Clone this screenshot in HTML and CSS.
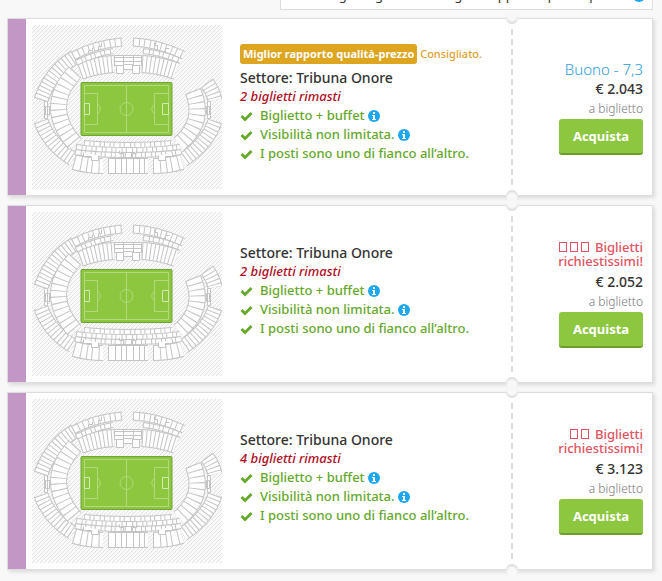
FILE: index.html
```
<!DOCTYPE html>
<html lang="it">
<head>
    <meta charset="UTF-8">
    <meta name="viewport" content="width=device-width, initial-scale=1.0">
    <title>Biglietti</title>
    <link rel="stylesheet" href="styles.css">
</head>
<body>
    <!-- Shared drawings -->
    <svg class="sprite" aria-hidden="true">
        <defs>
            <pattern id="hatch" width="4" height="4" patternUnits="userSpaceOnUse">
                <path class="hatch-line" d="M0 4L4 0M-1 1L1 -1M3 5L5 3"/>
            </pattern>
            <g id="rows-large">
                <path d="M9 75Q19 46 43 32"/>
                <path d="M9 96Q17 119 41 134"/>
                <path d="M183 96Q176 118 151 135"/>
                <path d="M175 58Q181 66 183 75"/>
            </g>
            <g id="rows-inner">
                <path d="M43 47Q10 82 43 119"/>
                <path d="M161 66Q174 97 147 119"/>
            </g>
            <g id="rows-long">
                <path d="M48 46Q65 40 82 39"/>
                <path d="M110 39Q127 40 144 46"/>
            </g>
            <g id="rows-short">
                <path d="M41 31Q63 19 90 17"/>
                <path d="M101 17Q126 18 151 30"/>
            </g>
            <g id="rows-thin">
                <path d="M44 38Q62 29 81 26"/>
                <path d="M111 26Q130 28 149 36"/>
                <path d="M52 118Q70 120 96 120T140 118"/>
                <path d="M44 122Q66 125 96 125T148 122"/>
                <path d="M43 127Q60 130 96 130T149 127"/>
            </g>
            <g id="rows-bottom">
                <path d="M42 137Q56 141 71 141"/>
                <path d="M76 141H116"/>
                <path d="M121 141Q136 141 150 137"/>
            </g>
            <symbol id="stadium" viewBox="0 0 190 164">
                <rect class="ground" width="190" height="164"/>
                <rect width="190" height="164" fill="url(#hatch)"/>
                <g fill="none">
                    <use href="#rows-large" stroke="#c4c4c4" stroke-width="15"/>
                    <use href="#rows-large" stroke="#fff" stroke-width="13"/>
                    <use href="#rows-large" stroke="#c4c4c4" stroke-width="14" stroke-dasharray="1 3"/>
                    <use href="#rows-inner" stroke="#c4c4c4" stroke-width="17"/>
                    <use href="#rows-inner" stroke="#fff" stroke-width="15"/>
                    <use href="#rows-inner" stroke="#c4c4c4" stroke-width="16" stroke-dasharray="1 5"/>
                    <use href="#rows-long" stroke="#c4c4c4" stroke-width="18"/>
                    <use href="#rows-long" stroke="#fff" stroke-width="16"/>
                    <use href="#rows-long" stroke="#c4c4c4" stroke-width="17" stroke-dasharray="1 3"/>
                    <use href="#rows-bottom" stroke="#c4c4c4" stroke-width="16"/>
                    <use href="#rows-bottom" stroke="#fff" stroke-width="14"/>
                    <use href="#rows-bottom" stroke="#c4c4c4" stroke-width="15" stroke-dasharray="1 6 1 5 1 4"/>
                    <use href="#rows-short" stroke="#c4c4c4" stroke-width="9"/>
                    <use href="#rows-short" stroke="#fff" stroke-width="7"/>
                    <use href="#rows-short" stroke="#c4c4c4" stroke-width="8" stroke-dasharray="1 5 1 4"/>
                    <use href="#rows-thin" stroke="#c4c4c4" stroke-width="6"/>
                    <use href="#rows-thin" stroke="#fff" stroke-width="4"/>
                    <use href="#rows-thin" stroke="#c4c4c4" stroke-width="5" stroke-dasharray="1 5 1 3"/>
                </g>
                <!-- Boxes between the stands -->
                <g class="box">
                    <path d="M82.500 30.500H109.500V40.500H82.500ZM82.500 32.500H109.500M82.500 36.500H109.500M91.500 30.500V40.500M101.500 30.500V40.500"/>
                    <path d="M84.500 40.500H91.500V48.500H84.500ZM100.500 40.500H107.500V48.500H100.500ZM91.500 39.500H100.500V44.500H91.500Z"/>
                    <path d="M12.500 76.500H15.500V93.500H12.500ZM13.500 81.500H17.500V89.500H13.500ZM175.500 76.500H178.500V93.500H175.500ZM174.500 81.500H177.500V89.500H174.500Z"/>
                    <path d="M56.500 28.500V25.500H60.500V22.500M66.500 26.500V21.500H69.500V17.500M122.500 17.500V20.500H125.500V25.500M133.500 28.500V23.500H137.500"/>
                    <path d="M51.500 127.500V131.500H59.500V135.500H66.500V130.500M87.500 125.500V128.500H91.500V132.500M100.500 132.500V128.500H104.500V125.500M126.500 130.500V135.500H133.500V131.500H140.500V127.500"/>
                </g>
                <!-- Pitch -->
                <rect class="pitch" x="49" y="57.500" width="91" height="53" rx="1"/>
                <path class="pitch-line" d="M52.500 60.500H136.500V107.500H52.500ZM94.500 60.500V107.500M52.500 68.500H65.500V99.500H52.500M136.500 68.500H122.500V99.500H136.500M65.500 79Q71 84 65.500 89M122.500 79Q117 84 122.500 89"/>
                <circle class="pitch-line" cx="94.500" cy="84" r="6.500"/>
                <path class="goal-line" d="M52.500 78.500H57.500V89.500H52.500ZM136.500 78.500H130.500V89.500H136.500Z"/>
            </symbol>
            <symbol id="check" viewBox="0 0 13 11">
                <path fill="#65a82b" d="M0.500 6L2.500 4L5 6.500L10.500 1L12.500 3L5 10.500Z"/>
            </symbol>
            <symbol id="info" viewBox="0 0 12 12">
                <circle cx="6" cy="6" r="6" fill="#1ba8ef"/>
                <path fill="#fff" d="M5 2H7V4H5ZM4 5H7V9H8V10H4V9H5V6H4Z"/>
            </symbol>
        </defs>
    </svg>

    <div class="container">
        <div class="notice">
            <p>Scegli i biglietti con miglior rapporto qualità-prezzo <svg class="info"><use href="#info"/></svg></p>
        </div>

        <div class="ticket">
            <svg class="map" role="img" aria-label="Mappa dello stadio"><use href="#stadium"/></svg>
            <div class="details">
                <div class="recommended"><span class="badge">Miglior rapporto qualità-prezzo</span> Consigliato.</div>
                <h3>Settore: Tribuna Onore</h3>
                <p class="left">2 biglietti rimasti</p>
                <ul>
                    <li><svg class="check"><use href="#check"/></svg>Biglietto + buffet <svg class="info"><use href="#info"/></svg></li>
                    <li><svg class="check"><use href="#check"/></svg>Visibilità non limitata. <svg class="info"><use href="#info"/></svg></li>
                    <li><svg class="check"><use href="#check"/></svg>I posti sono uno di fianco all’altro.</li>
                </ul>
            </div>
            <div class="buy">
                <div class="rating">Buono - 7,3</div>
                <div class="price">€ 2.043</div>
                <div class="per">a biglietto</div>
                <button class="btn" type="button">Acquista</button>
            </div>
        </div>

        <div class="ticket">
            <svg class="map" role="img" aria-label="Mappa dello stadio"><use href="#stadium"/></svg>
            <div class="details">
                <h3>Settore: Tribuna Onore</h3>
                <p class="left">2 biglietti rimasti</p>
                <ul>
                    <li><svg class="check"><use href="#check"/></svg>Biglietto + buffet <svg class="info"><use href="#info"/></svg></li>
                    <li><svg class="check"><use href="#check"/></svg>Visibilità non limitata. <svg class="info"><use href="#info"/></svg></li>
                    <li><svg class="check"><use href="#check"/></svg>I posti sono uno di fianco all’altro.</li>
                </ul>
            </div>
            <div class="buy">
                <div class="hot"><i></i><i></i><i></i> Biglietti richiestissimi!</div>
                <div class="price">€ 2.052</div>
                <div class="per">a biglietto</div>
                <button class="btn" type="button">Acquista</button>
            </div>
        </div>

        <div class="ticket">
            <svg class="map" role="img" aria-label="Mappa dello stadio"><use href="#stadium"/></svg>
            <div class="details">
                <h3>Settore: Tribuna Onore</h3>
                <p class="left">4 biglietti rimasti</p>
                <ul>
                    <li><svg class="check"><use href="#check"/></svg>Biglietto + buffet <svg class="info"><use href="#info"/></svg></li>
                    <li><svg class="check"><use href="#check"/></svg>Visibilità non limitata. <svg class="info"><use href="#info"/></svg></li>
                    <li><svg class="check"><use href="#check"/></svg>I posti sono uno di fianco all’altro.</li>
                </ul>
            </div>
            <div class="buy">
                <div class="hot"><i></i><i></i> Biglietti richiestissimi!</div>
                <div class="price">€ 3.123</div>
                <div class="per">a biglietto</div>
                <button class="btn" type="button">Acquista</button>
            </div>
        </div>
    </div>
</body>
</html>
```
FILE: styles.css
```
* {
    box-sizing: border-box;
}
body {
    font-family: "Noto Sans", "Open Sans", sans-serif;
    font-size: 13px;
    line-height: 19px;
    margin: 0;
    color: #333;
    background-color: #f8f8f8;
}
h3, p, ul {
    margin: 0;
    padding: 0;
}
.sprite {
    display: block;
    width: 0;
    height: 0;
}
.container {
    padding: 0 9px 0 7px;
}
.notice {
    display: flex;
    align-items: flex-end;
    justify-content: flex-end;
    height: 10px;
    margin: 0 0 8px 273px;
    padding: 0 7px 4px;
    overflow: hidden;
    background: #fff;
    border: 1px solid #ddd;
    border-top: none;
    white-space: nowrap;
}
.ticket {
    position: relative;
    display: flex;
    align-items: center;
    min-height: 178px;
    margin-bottom: 9px;
    padding-left: 18px;
    background: linear-gradient(to right, #c297c5 18px, #fff 18px);
    border: 1px solid #ddd;
    box-shadow: 2px 2px 4px rgba(0, 0, 0, 0.12);
}
.map {
    flex: none;
    width: 190px;
    height: 164px;
    margin-left: 6px;
}
.ground {
    fill: #fafafa;
}
.hatch-line {
    stroke: #e2e2e2;
    stroke-width: 1;
}
.box {
    fill: #fff;
    stroke: #c4c4c4;
}
.pitch {
    fill: #8dc73f;
    stroke: #6fa336;
}
.pitch-line {
    fill: none;
    stroke: #b2d97e;
}
.goal-line {
    fill: none;
    stroke: #d3eab5;
}
.details {
    flex: 1;
    padding: 0 0 8px 18px;
}
.recommended {
    line-height: 20px;
    margin-bottom: 4px;
    font-size: 11px;
    font-weight: 500;
    color: #e0a030;
    white-space: nowrap;
}
.badge {
    display: inline-block;
    padding: 0 3px;
    border-radius: 3px;
    font-weight: bold;
    color: #fff;
    background-color: #dda520;
}
.details h3 {
    font-size: 14px;
    font-weight: 500;
}
.left {
    font-style: italic;
    font-weight: 500;
    color: #b00d1e;
}
.details ul {
    list-style: none;
    font-weight: 500;
    color: #65a82b;
}
.check {
    width: 13px;
    height: 11px;
    margin-right: 7px;
    vertical-align: -2px;
}
.info {
    width: 12px;
    height: 12px;
    vertical-align: -2px;
}
/* Tear-off part with the dashed line and the two notches */
.buy {
    flex: 0 0 141px;
    align-self: stretch;
    display: flex;
    flex-direction: column;
    align-items: flex-end;
    justify-content: center;
    padding-right: 9px;
    text-align: right;
    background: repeating-linear-gradient(#ddd 0, #ddd 6px, transparent 6px, transparent 10px) 0 10px / 2px 160px no-repeat;
}
.ticket::before, .ticket::after {
    content: "";
    position: absolute;
    right: 134px;
    width: 12px;
    height: 12px;
    background: #f8f8f8;
    border-radius: 50%;
}
.ticket::before {
    top: -7px;
    box-shadow: inset 0 -2px 2px #ddd;
}
.ticket::after {
    bottom: -7px;
    box-shadow: inset 0 2px 2px #ddd;
}
.rating {
    font-size: 15px;
    font-weight: 300;
    line-height: 20px;
    color: #2a9de0;
}
.hot {
    width: 90px;
    font-weight: 500;
    line-height: 14px;
    margin-bottom: 4px;
    color: #e05260;
}
.hot i {
    display: inline-block;
    width: 8px;
    height: 10px;
    margin-right: 3px;
    border: 1px solid currentColor;
}
.price {
    font-size: 14px;
    font-weight: 500;
    line-height: 20px;
}
.per {
    font-size: 12px;
    font-weight: 300;
    line-height: 20px;
    color: #777;
}
.btn {
    width: 84px;
    height: 36px;
    padding: 0;
    border: none;
    border-bottom: 2px solid #6d9e2c;
    border-radius: 3px;
    font: bold 13px "Noto Sans", "Open Sans", sans-serif;
    color: #fff;
    background-color: #8dc73f;
    cursor: pointer;
}
```
